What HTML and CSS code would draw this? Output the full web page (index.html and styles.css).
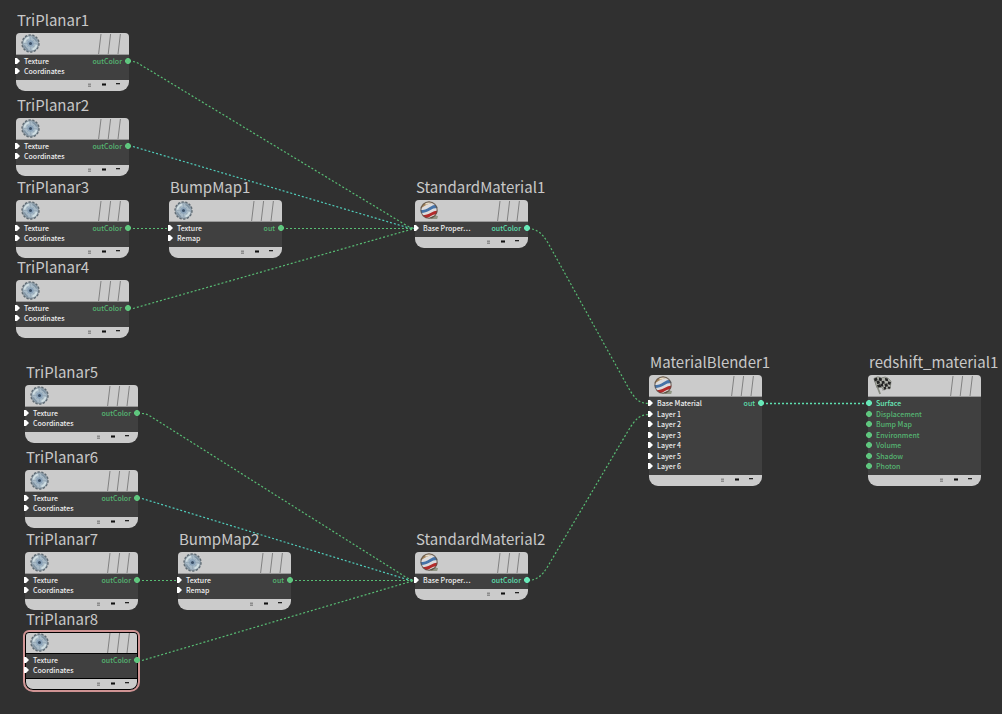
FILE: index.html
```html
<!DOCTYPE html>
<html lang="en">
<head>
<meta charset="utf-8">
<title>Material node graph</title>
<link rel="stylesheet" href="styles.css">
</head>
<body>
<svg class="defs" aria-hidden="true">
  <defs>
    <symbol id="gear" viewBox="0 0 20 20">
      <circle cx="10" cy="10" r="9" fill="#8795a0" stroke="#5f6b73" stroke-width="1.400" stroke-dasharray="2.400 1.600"/>
      <circle cx="10" cy="10" r="7.600" fill="#a8bac7"/>
      <path d="M10 3v14M3 10h14M5 5l10 10M15 5L5 15" stroke="#9aacb9" stroke-width="1"/>
      <path d="M3.500 9a7 7 0 0 1 5-5.500M12 16.500a7 7 0 0 0 4.500-5" stroke="#d0dee2" stroke-width="2" fill="none"/>
      <path d="M12 3.500a7 7 0 0 1 4.500 4.500M3.500 12a7 7 0 0 0 4 4.500" stroke="#7d91a1" stroke-width="1.500" fill="none"/>
      <circle cx="10" cy="10" r="3.400" fill="#8aa2b8"/>
      <circle cx="10" cy="10" r="1.600" fill="#3b5068"/>
    </symbol>
    <symbol id="ball" viewBox="0 0 20 20">
      <clipPath id="ball-clip"><circle cx="9.500" cy="9.500" r="9"/></clipPath>
      <path d="M13 14l6 2-1 3h-7z" fill="#8f9583"/>
      <g clip-path="url(#ball-clip)">
        <rect width="20" height="20" fill="#dedcdc"/>
        <path d="M0 0h20v2Q12 1 7 4T0 8z" fill="#a9865a"/>
        <path d="M5 2q4-2 8-1l-3 2-4 1z" fill="#e6d9c2"/>
        <path d="M0 9.500Q6 9.500 10 6.500T20 4v3.500Q14 7 11 9.500T0 13z" fill="#4673a8"/>
        <path d="M0 15Q7 15 11 12.500T20 10v4Q14 13.500 11 16T1 19z" fill="#b32b2b"/>
        <path d="M3 20q5-1 8-3t9-3v6z" fill="#5d5a40"/>
      </g>
      <circle cx="9.500" cy="9.500" r="8.600" fill="none" stroke="#5d5149" stroke-width="1.200" opacity=".8"/>
    </symbol>
    <symbol id="flags" viewBox="0 0 20 20">
      <path d="M1.500 3L7.500 19" stroke="#85897f" stroke-width="1.800"/>
      <path d="M17 10L10 15" stroke="#808080" stroke-width="1.200"/>
      <path d="M1 2.500q4-3 8-.5 4-2 7 .500l3 3-1 8q-4-1-6 1-3-3-6-3l-2 .500z" fill="#aeb0a8" stroke="#777a72" stroke-width=".8"/>
      <path d="M1 3l3-1.500 1 3-3 1.300zM6.500 1.500l3 1-.5 3-3-1zM3.500 5.500l3-.8 1 3-3 1zM9 5.500l2.800-.5.700 3-3 .5zM12.500 2l3 .5.500 3-3-.5zM4 10l3.500-1.500 1 3-3 .5zM8 8l2.500.5.500 2.700-2.800-.5zM12 8.500l3-.8.800 3-3 .8zM16 5.500l3 1-1 3-2.500-1zM11 11.500l2.500-.3.300 2.500-2 .8zM15.500 11l2.800.5-.5 2-2-.3z" fill="#252525"/>
    </symbol>
    <symbol id="slashes" viewBox="0 0 24 20">
      <path d="M3 0L.6 20M12.600 0l-2.400 20M22.400 0L20 20" stroke="#808080" stroke-width="1" fill="none"/>
    </symbol>
    <symbol id="tools" viewBox="0 0 34 6">
      <path d="M1 1h3v4H1z" fill="#aaa"/><path d="M1 2h3v1H1zM1 4h3v1H1z" fill="#8c8c8c"/>
      <path d="M15 1h4v3h-4z" fill="#666"/><path d="M15 2h4v1h-4z" fill="#111"/>
      <path d="M29 1h4v1h-4z" fill="#222"/><path d="M29 2h4v1h-4z" fill="#999"/>
    </symbol>
    <symbol id="arrow" viewBox="0 0 6 8"><path d="M0 1h2l3 3-3 3H0z" fill="#fff"/></symbol>
    <symbol id="dot" viewBox="0 0 6 8"><path d="M2 1h2l2 2v2L4 7H2L0 5V3z" fill="currentColor"/></symbol>
  </defs>
</svg>
<main class="graph">
  <svg class="wires" aria-hidden="true">
    <path d="M129 61.500H133Q137 62 141 65L404 224Q411 228.500 416 228.500"/>
    <path class="cyan" d="M129 146.500H133L409 228L416 228.500"/>
    <path d="M129 228.500H169M282 228.500H416"/>
    <path d="M129 308.500H133L409 230L416 228.500"/>
    <path d="M138 413.500H142Q146 413.500 150 416L404 576Q411 580.500 416 580.500"/>
    <path class="cyan" d="M138 498.500H142L409 580L416 580.500"/>
    <path d="M138 580.500H178M291 580.500H416"/>
    <path d="M138 660.500H142L409 582L416 580.500"/>
    <path d="M528 228.500C537 229 542 233 548 243L628 387C636 401 640 403.500 650 403.500"/>
    <path d="M528 580.500C537 580 542 576 548 566L628 431C636 418 640 414.500 650 414.500"/>
    <path class="mint" d="M762 403.500H869"/>
  </svg>

  <section class="node tri1"><h2>TriPlanar1</h2><div class="card"><header><svg class="icon"><use href="#gear"/></svg><svg class="slashes"><use href="#slashes"/></svg></header><ul><li><svg class="port"><use href="#arrow"/></svg><span>Texture</span><span class="out">outColor</span><svg class="port end"><use href="#dot"/></svg></li><li><svg class="port"><use href="#arrow"/></svg><span>Coordinates</span></li></ul><footer><svg class="tools"><use href="#tools"/></svg></footer></div></section>
  <section class="node tri2"><h2>TriPlanar2</h2><div class="card"><header><svg class="icon"><use href="#gear"/></svg><svg class="slashes"><use href="#slashes"/></svg></header><ul><li><svg class="port"><use href="#arrow"/></svg><span>Texture</span><span class="out">outColor</span><svg class="port end"><use href="#dot"/></svg></li><li><svg class="port"><use href="#arrow"/></svg><span>Coordinates</span></li></ul><footer><svg class="tools"><use href="#tools"/></svg></footer></div></section>
  <section class="node tri3"><h2>TriPlanar3</h2><div class="card"><header><svg class="icon"><use href="#gear"/></svg><svg class="slashes"><use href="#slashes"/></svg></header><ul><li><svg class="port"><use href="#arrow"/></svg><span>Texture</span><span class="out">outColor</span><svg class="port end"><use href="#dot"/></svg></li><li><svg class="port"><use href="#arrow"/></svg><span>Coordinates</span></li></ul><footer><svg class="tools"><use href="#tools"/></svg></footer></div></section>
  <section class="node tri4"><h2>TriPlanar4</h2><div class="card"><header><svg class="icon"><use href="#gear"/></svg><svg class="slashes"><use href="#slashes"/></svg></header><ul><li><svg class="port"><use href="#arrow"/></svg><span>Texture</span><span class="out">outColor</span><svg class="port end"><use href="#dot"/></svg></li><li><svg class="port"><use href="#arrow"/></svg><span>Coordinates</span></li></ul><footer><svg class="tools"><use href="#tools"/></svg></footer></div></section>
  <section class="node tri5"><h2>TriPlanar5</h2><div class="card"><header><svg class="icon"><use href="#gear"/></svg><svg class="slashes"><use href="#slashes"/></svg></header><ul><li><svg class="port"><use href="#arrow"/></svg><span>Texture</span><span class="out">outColor</span><svg class="port end"><use href="#dot"/></svg></li><li><svg class="port"><use href="#arrow"/></svg><span>Coordinates</span></li></ul><footer><svg class="tools"><use href="#tools"/></svg></footer></div></section>
  <section class="node tri6"><h2>TriPlanar6</h2><div class="card"><header><svg class="icon"><use href="#gear"/></svg><svg class="slashes"><use href="#slashes"/></svg></header><ul><li><svg class="port"><use href="#arrow"/></svg><span>Texture</span><span class="out">outColor</span><svg class="port end"><use href="#dot"/></svg></li><li><svg class="port"><use href="#arrow"/></svg><span>Coordinates</span></li></ul><footer><svg class="tools"><use href="#tools"/></svg></footer></div></section>
  <section class="node tri7"><h2>TriPlanar7</h2><div class="card"><header><svg class="icon"><use href="#gear"/></svg><svg class="slashes"><use href="#slashes"/></svg></header><ul><li><svg class="port"><use href="#arrow"/></svg><span>Texture</span><span class="out">outColor</span><svg class="port end"><use href="#dot"/></svg></li><li><svg class="port"><use href="#arrow"/></svg><span>Coordinates</span></li></ul><footer><svg class="tools"><use href="#tools"/></svg></footer></div></section>
  <section class="node tri8 selected"><h2>TriPlanar8</h2><div class="card"><header><svg class="icon"><use href="#gear"/></svg><svg class="slashes"><use href="#slashes"/></svg></header><ul><li><svg class="port"><use href="#arrow"/></svg><span>Texture</span><span class="out">outColor</span><svg class="port end"><use href="#dot"/></svg></li><li><svg class="port"><use href="#arrow"/></svg><span>Coordinates</span></li></ul><footer><svg class="tools"><use href="#tools"/></svg></footer></div></section>

  <section class="node bump1"><h2>BumpMap1</h2><div class="card"><header><svg class="icon"><use href="#gear"/></svg><svg class="slashes"><use href="#slashes"/></svg></header><ul><li><svg class="port"><use href="#arrow"/></svg><span>Texture</span><span class="out">out</span><svg class="port end"><use href="#dot"/></svg></li><li><svg class="port"><use href="#arrow"/></svg><span>Remap</span></li></ul><footer><svg class="tools"><use href="#tools"/></svg></footer></div></section>
  <section class="node bump2"><h2>BumpMap2</h2><div class="card"><header><svg class="icon"><use href="#gear"/></svg><svg class="slashes"><use href="#slashes"/></svg></header><ul><li><svg class="port"><use href="#arrow"/></svg><span>Texture</span><span class="out">out</span><svg class="port end"><use href="#dot"/></svg></li><li><svg class="port"><use href="#arrow"/></svg><span>Remap</span></li></ul><footer><svg class="tools"><use href="#tools"/></svg></footer></div></section>

  <section class="node std1 active"><h2>StandardMaterial1</h2><div class="card"><header><svg class="icon"><use href="#ball"/></svg><svg class="slashes"><use href="#slashes"/></svg></header><ul><li><svg class="port"><use href="#arrow"/></svg><span>Base Proper…</span><span class="out">outColor</span><svg class="port end"><use href="#dot"/></svg></li></ul><footer><svg class="tools"><use href="#tools"/></svg></footer></div></section>
  <section class="node std2 active"><h2>StandardMaterial2</h2><div class="card"><header><svg class="icon"><use href="#ball"/></svg><svg class="slashes"><use href="#slashes"/></svg></header><ul><li><svg class="port"><use href="#arrow"/></svg><span>Base Proper…</span><span class="out">outColor</span><svg class="port end"><use href="#dot"/></svg></li></ul><footer><svg class="tools"><use href="#tools"/></svg></footer></div></section>

  <section class="node blender active tall"><h2>MaterialBlender1</h2><div class="card"><header><svg class="icon"><use href="#ball"/></svg><svg class="slashes"><use href="#slashes"/></svg></header>
    <ul>
      <li><svg class="port"><use href="#arrow"/></svg><span>Base Material</span><span class="out">out</span><svg class="port end"><use href="#dot"/></svg></li>
      <li><svg class="port"><use href="#arrow"/></svg><span>Layer 1</span></li>
      <li><svg class="port"><use href="#arrow"/></svg><span>Layer 2</span></li>
      <li><svg class="port"><use href="#arrow"/></svg><span>Layer 3</span></li>
      <li><svg class="port"><use href="#arrow"/></svg><span>Layer 4</span></li>
      <li><svg class="port"><use href="#arrow"/></svg><span>Layer 5</span></li>
      <li><svg class="port"><use href="#arrow"/></svg><span>Layer 6</span></li>
    </ul><footer><svg class="tools"><use href="#tools"/></svg></footer></div></section>
  <section class="node redshift tall"><h2>redshift_material1</h2><div class="card"><header><svg class="icon"><use href="#flags"/></svg><svg class="slashes"><use href="#slashes"/></svg></header>
    <ul class="sinks">
      <li class="linked"><svg class="port"><use href="#dot"/></svg><span>Surface</span></li>
      <li><svg class="port"><use href="#dot"/></svg><span>Displacement</span></li>
      <li><svg class="port"><use href="#dot"/></svg><span>Bump Map</span></li>
      <li><svg class="port"><use href="#dot"/></svg><span>Environment</span></li>
      <li><svg class="port"><use href="#dot"/></svg><span>Volume</span></li>
      <li><svg class="port"><use href="#dot"/></svg><span>Shadow</span></li>
      <li><svg class="port"><use href="#dot"/></svg><span>Photon</span></li>
    </ul><footer><svg class="tools"><use href="#tools"/></svg></footer></div></section>
</main>
</body>
</html>
```
FILE: styles.css
```css
* { box-sizing: border-box; }
body {
  margin: 0;
  background: #303030;
  color: #c8c8c8;
  font-family: "Noto Sans CJK SC", "Noto Sans", sans-serif;
}
.defs { position: absolute; width: 0; height: 0; }
.graph { position: relative; min-height: 100vh; overflow: hidden; }
.wires { position: absolute; inset: 0; width: 100%; height: 100%; fill: none; stroke: #58bd74; stroke-width: 1.2; stroke-dasharray: 2 2; }
.wires .cyan { stroke: #50cdbb; }
.wires .mint { stroke: #5edfb0; stroke-width: 1.6; }

.node { position: absolute; width: 113px; }
.node h2 { margin: 0; height: 25px; padding-left: 1px; font-size: 15px; font-weight: 400; line-height: 24px; white-space: nowrap; }
.card { position: relative; display: flex; flex-direction: column; border-radius: 4px 4px 9px 9px; background: #404040; }
.card header { display: flex; justify-content: space-between; height: 22px; padding: 1px 7px 0 5px; background: #cbcbcb; border-bottom: 1px solid #999; border-radius: 4px 4px 0 0; }
.icon { width: 19px; height: 19px; }
.slashes { width: 24px; height: 20px; }
.card ul { display: flex; flex-direction: column; margin: 0; padding: 1px 0 4px; list-style: none; font-size: 7px; font-weight: 500; line-height: 10px; color: #eee; }
.card li { display: flex; align-items: center; height: 10px; white-space: nowrap; }
.port { position: relative; z-index: 1; flex: none; width: 6px; height: 8px; margin: 0 3px 0 -1px; }
.port.end { margin: 0 -2px 0 3px; color: #5fc67e; }
.out { margin-left: auto; color: #55b572; }
.active .out { color: #5ddfae; }
.active .port.end { color: #68e8b8; }
.card footer { display: flex; justify-content: flex-end; height: 11px; padding: 2px 8px 0 0; background: #cbcbcb; border-radius: 0 0 9px 9px; }
.tools { width: 34px; height: 6px; }
.tall ul { height: 78px; justify-content: space-between; }
.card .sinks { color: #55b572; }
.sinks .port { margin: 0 4px 0 -2px; color: #5fc67e; }
.sinks .linked, .sinks .linked .port { color: #68e8b8; }
.selected .card header, .selected .card ul { border-bottom: 1px solid #000; }
.selected .card ul { padding-bottom: 3px; }
.selected .card::after { content: ""; position: absolute; inset: -2px; border: 2px solid #d09494; border-radius: 6px 6px 10px 10px; box-shadow: inset 0 0 0 1px #000; pointer-events: none; }

.tri1 { left: 16px; top: 8px; }
.tri2 { left: 16px; top: 93px; }
.tri3 { left: 16px; top: 175px; }
.tri4 { left: 16px; top: 255px; }
.tri5 { left: 25px; top: 360px; }
.tri6 { left: 25px; top: 445px; }
.tri7 { left: 25px; top: 527px; }
.tri8 { left: 25px; top: 607px; }
.bump1 { left: 169px; top: 175px; }
.bump2 { left: 178px; top: 527px; }
.std1 { left: 415px; top: 175px; }
.std2 { left: 415px; top: 527px; }
.blender { left: 649px; top: 350px; }
.redshift { left: 868px; top: 350px; }
```
